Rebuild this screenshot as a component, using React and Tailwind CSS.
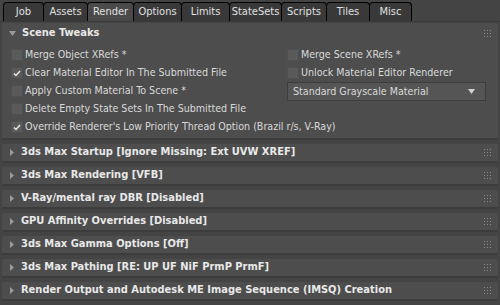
import React from "react";

const tabs = ["Job", "Assets", "Render", "Options", "Limits", "StateSets", "Scripts", "Tiles", "Misc"];
const tabW = [41, 45, 47, 49, 49, 53, 46, 44, 43];

const rollouts = [
  "3ds Max Startup [Ignore Missing: Ext UVW XREF]",
  "3ds Max Rendering [VFB]",
  "V-Ray/mental ray DBR [Disabled]",
  "GPU Affinity Overrides [Disabled]",
  "3ds Max Gamma Options [Off]",
  "3ds Max Pathing [RE: UP UF NiF PrmP PrmF]",
  "Render Output and Autodesk ME Image Sequence (IMSQ) Creation",
];

const bold = { fontFamily: "'DejaVu Sans Condensed', 'DejaVu Sans', sans-serif" };

const Grip = () => (
  <svg width="7" height="7" viewBox="0 0 7 7" className="shrink-0">
    {[0, 3, 6].map((y) =>
      [0, 3, 6].map((x) => <rect key={`${x}-${y}`} x={x} y={y} width="1" height="1" fill="#8a8a8a" />)
    )}
  </svg>
);

const Check = ({ checked, label }) => (
  <div className="flex items-center h-[18px]">
    <div className="w-[12px] h-[12px] bg-[#5a5a5a] border border-[#505050] flex items-center justify-center mr-[2px]">
      {checked && (
        <svg width="8" height="7" viewBox="0 0 8 7">
          <path d="M1 3.5 L3 5.5 L7 1" stroke="#e8e8e8" strokeWidth="1.5" fill="none" />
        </svg>
      )}
    </div>
    <span className="text-[10.6px] text-[#dadada] whitespace-nowrap">{label}</span>
  </div>
);

export default function App() {
  return (
    <div
      className="w-[500px] h-[305px] bg-[#444444] overflow-hidden"
      style={{ fontFamily: "'DejaVu Sans Condensed', 'DejaVu Sans', sans-serif" }}
    >
      {/* tab bar */}
      <div className="flex h-[22px] pl-[3px] pt-[2px] items-end border-b border-[#3a3a3a]">
        {tabs.map((t, i) => (
          <div
            key={t}
            style={{ width: tabW[i] }}
            className={`h-[19px] border border-black border-b-0 rounded-t-[4px] text-[11px] text-[#e0e0e0] flex items-center justify-center -mr-px ${
              t === "Render" ? "bg-[#4a4a4a]" : "bg-[#393939]"
            }`}
          >
            {t}
          </div>
        ))}
      </div>

      <div className="px-[2px] pt-[1px] flex flex-col gap-[4px]">
        {/* Scene Tweaks */}
        <div className="bg-[#4d4d4d] rounded-[2px] pb-[2px] border-b-2 border-[#3c3c3c]">
          <div className="flex items-center h-[21px] pl-[7px] pr-[7px]">
            <svg width="7" height="5" viewBox="0 0 7 5" className="mr-[6px]">
              <path d="M0 0 H7 L3.5 5 Z" fill="#9a9a9a" />
            </svg>
            <span className="font-bold text-[11px] text-[#e8e8e8] flex-1" style={bold}>
              Scene Tweaks
            </span>
            <Grip />
          </div>
          <div className="flex pl-[9px] pt-[2px]">
            <div className="w-[276px]">
              <Check label="Merge Object XRefs *" />
              <Check checked label="Clear Material Editor In The Submitted File" />
              <Check label="Apply Custom Material To Scene *" />
              <Check label="Delete Empty State Sets In The Submitted File" />
            </div>
            <div>
              <Check label="Merge Scene XRefs *" />
              <Check label="Unlock Material Editor Renderer" />
              <div className="w-[199px] h-[19px] bg-[#555555] border border-[#3d3d3d] flex items-center justify-between px-[5px] text-[10.6px] text-[#dadada]">
                <span>Standard Grayscale Material</span>
                <svg width="7" height="5" viewBox="0 0 7 5" className="mr-[5px]">
                  <path d="M0 0 H7 L3.5 5 Z" fill="#d0d0d0" />
                </svg>
              </div>
            </div>
          </div>
          <div className="pl-[9px]">
            <Check checked label="Override Renderer's Low Priority Thread Option (Brazil r/s, V-Ray)" />
          </div>
        </div>

        {rollouts.map((r) => (
          <div
            key={r}
            className="bg-[#4d4d4d] rounded-[2px] h-[19px] border-b-2 border-[#3c3c3c] flex items-center pl-[8px] pr-[7px]"
          >
            <svg width="4" height="7" viewBox="0 0 4 7" className="mr-[7px]">
              <path d="M0 0 L4 3.5 L0 7 Z" fill="#9a9a9a" />
            </svg>
            <span className="font-bold text-[11px] text-[#e8e8e8] flex-1 whitespace-nowrap" style={bold}>
              {r}
            </span>
            <Grip />
          </div>
        ))}
      </div>
    </div>
  );
}
